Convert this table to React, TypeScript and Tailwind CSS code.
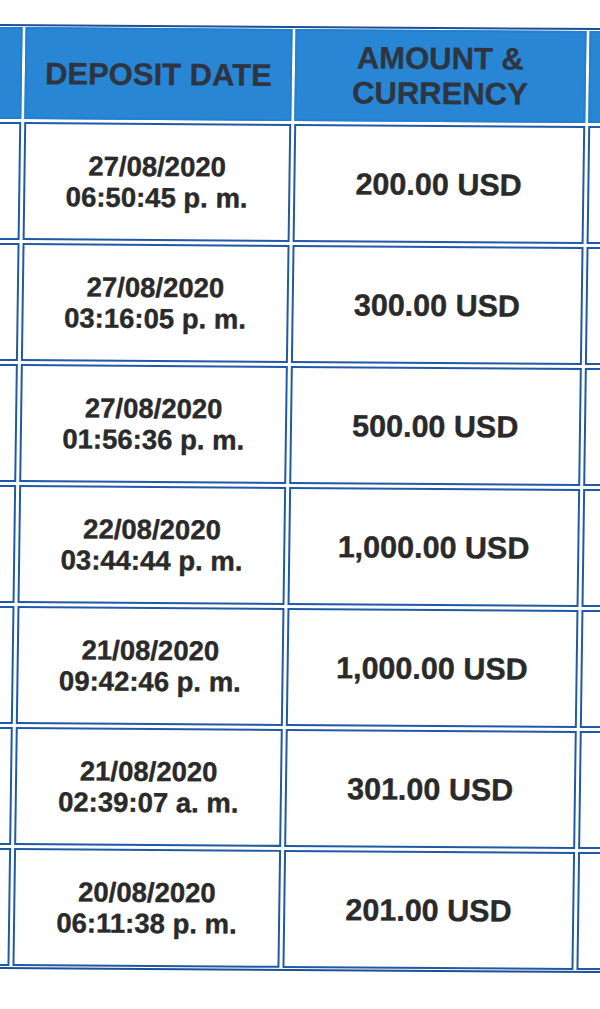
import React from 'react';

const ROWS = [
  { date: '27/08/2020', time: '06:50:45 p. m.', amount: '200.00 USD' },
  { date: '27/08/2020', time: '03:16:05 p. m.', amount: '300.00 USD' },
  { date: '27/08/2020', time: '01:56:36 p. m.', amount: '500.00 USD' },
  { date: '22/08/2020', time: '03:44:44 p. m.', amount: '1,000.00 USD' },
  { date: '21/08/2020', time: '09:42:46 p. m.', amount: '1,000.00 USD' },
  { date: '21/08/2020', time: '02:39:07 a. m.', amount: '301.00 USD' },
  { date: '20/08/2020', time: '06:11:38 p. m.', amount: '201.00 USD' },
];

const headCell = 'bg-[#2886d5] border-2 border-[#2380cf] flex items-center justify-center text-center';
const bodyCell = 'bg-white border-2 border-[#2259a6] flex flex-col items-center justify-center text-center';
const ink = 'font-bold text-[#2a2a2a] [-webkit-text-stroke:0.4px_#2a2a2a]';

export default function App() {
  return (
    <div className="w-[600px] h-[1009px] overflow-hidden bg-white font-['Liberation_Sans',Arial,sans-serif]">
      {/* scanned table, a little skewed like the paper */}
      <div className="ml-[-27.5px] mt-[26px] w-max border-2 border-[#1c4f96] p-px origin-center [transform:rotate(0.4deg)_skewX(-0.4deg)]">
        <div className="grid grid-cols-[40px_267px_290.5px_40px] grid-rows-[92px_repeat(7,118px)] gap-[3px]">
          {/* header */}
          <div className={headCell} />
          <div className={headCell}>
            <span className="text-[31px] font-bold leading-[35px] text-[#2e3540] [-webkit-text-stroke:0.3px_#2e3540]">
              DEPOSIT DATE
            </span>
          </div>
          <div className={headCell}>
            <span className="text-[31px] font-bold leading-[35px] text-[#2e3540] [-webkit-text-stroke:0.3px_#2e3540]">
              AMOUNT &amp;
              <br />
              CURRENCY
            </span>
          </div>
          <div className={headCell} />

          {ROWS.map((r, i) => (
            <React.Fragment key={i}>
              <div className={bodyCell} />
              <div className={bodyCell}>
                <span className={`text-[27.5px] leading-[31px] ${ink}`}>{r.date}</span>
                <span className={`text-[27.5px] leading-[31px] ${ink}`}>{r.time}</span>
              </div>
              <div className={bodyCell}>
                <span className={`text-[30.5px] leading-[35px] ${ink}`}>{r.amount}</span>
              </div>
              <div className={bodyCell} />
            </React.Fragment>
          ))}
        </div>
      </div>
    </div>
  );
}
